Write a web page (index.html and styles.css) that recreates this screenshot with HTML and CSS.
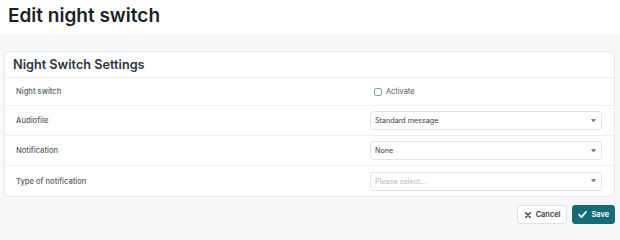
FILE: index.html
```html
<!DOCTYPE html>
<html>
<head>
<meta charset="utf-8">
<link rel="stylesheet" href="styles.css">
</head>
<body>
<div class="page-header">
  <h1 class="page-title">Edit night switch</h1>
</div>
<div class="content">
  <div class="card">
    <div class="card-header">Night Switch Settings</div>
    <div class="row first">
      <div class="label">Night switch</div>
      <div class="field">
        <label class="check"><span class="box"></span><span>Activate</span></label>
      </div>
    </div>
    <div class="row">
      <div class="label">Audiofile</div>
      <div class="field">
        <div class="select"><span>Standard message</span><span class="caret"></span></div>
      </div>
    </div>
    <div class="row">
      <div class="label">Notification</div>
      <div class="field">
        <div class="select"><span>None</span><span class="caret"></span></div>
      </div>
    </div>
    <div class="row last">
      <div class="label">Type of notification</div>
      <div class="field">
        <div class="select placeholder"><span>Please select...</span><span class="caret"></span></div>
      </div>
    </div>
  </div>
  <div class="actions">
    <button class="btn btn-cancel"><svg width="6" height="6" viewBox="0 0 8 8"><path d="M1 1L7 7M7 1L1 7" stroke="#3a3f47" stroke-width="2" stroke-linecap="round"/></svg>Cancel</button>
    <button class="btn btn-save"><svg width="9" height="7" viewBox="0 0 10 8"><path d="M1 4.2L3.8 7L9 1" stroke="#fff" stroke-width="1.9" fill="none" stroke-linecap="round" stroke-linejoin="round"/></svg>Save</button>
  </div>
</div>
</body>
</html>
```
FILE: styles.css
```css
* { box-sizing: border-box; }
html, body { margin: 0; padding: 0; }
body {
  font-family: Inter, "Noto Sans", sans-serif;
  background: #f7f8fa;
  color: #1f2430;
  width: 620px;
  height: 227px;
  overflow: hidden;
}
.page-header {
  background: #fff;
  height: 33px;
  padding: 4px 8px 0;
}
.page-title {
  margin: 0;
  font-size: 19px;
  font-weight: 600;
  line-height: 24px;
  color: #1b1f27;
}
.content {
  padding: 18px 5px 0 4px;
}
.card {
  background: #fff;
  border: 1px solid #e7e9ed;
  border-radius: 5px;
}
.card-header {
  height: 26px;
  padding: 3px 8px 0;
  font-size: 12.7px;
  font-weight: 600;
  line-height: 19px;
  color: #2f3542;
  border-bottom: 1px solid #eceef1;
}
.row {
  display: grid;
  grid-template-columns: 365px 1fr;
  height: 30px;
  align-items: center;
  border-bottom: 1px solid #eef0f3;
}
.row.first { height: 28px; }
.row.last { border-bottom: none; height: 30px; }
.label {
  padding-left: 11px;
  font-size: 7.6px;
  font-weight: 500;
  color: #575d66;
}
.field { padding-right: 12px; }
.check {
  display: flex;
  align-items: center;
  gap: 4px;
  padding-left: 4px;
  font-size: 7.4px;
  color: #4d535c;
}
.box {
  width: 8px;
  height: 8px;
  border: 1px solid #7fa7ae;
  border-radius: 2px;
  display: inline-block;
}
.select {
  height: 19px;
  border: 1px solid #e2e5ea;
  border-radius: 3px;
  display: flex;
  align-items: center;
  justify-content: space-between;
  padding: 0 5px 0 4px;
  font-size: 7.2px;
  color: #3c424b;
}
.select.placeholder { color: #b5bac2; }
.caret {
  width: 5px;
  height: 4px;
  border-left: 2.5px solid transparent;
  border-right: 2.5px solid transparent;
  border-top: 3px solid #7a7f87;
}
.actions {
  display: flex;
  justify-content: flex-end;
  gap: 5px;
  padding-top: 8px;
}
.btn {
  height: 19px;
  border-radius: 3px;
  font-family: Inter, "Noto Sans", sans-serif;
  font-size: 7.4px;
  font-weight: 600;
  display: flex;
  align-items: center;
  gap: 5px;
  cursor: pointer;
}
.btn-cancel {
  background: #fff;
  border: 1px solid #dfe2e7;
  color: #3a3f47;
  padding: 0 5px 0 7px;
}
.btn-save {
  background: #166c76;
  border: 1px solid #166c76;
  color: #fff;
  padding: 0 5px 0 5px;
}
```
